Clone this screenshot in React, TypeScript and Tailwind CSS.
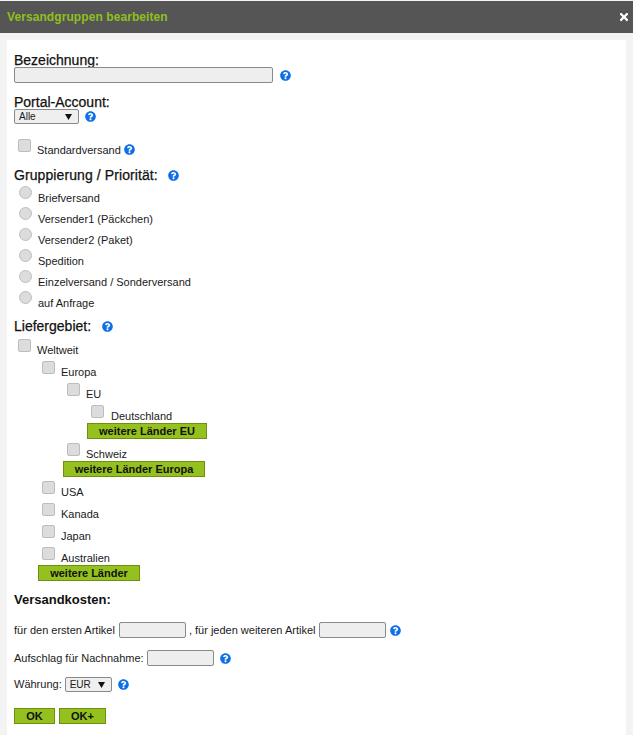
import { FaQuestionCircle, FaTimes } from "react-icons/fa";

function Help({ className = "" }: { className?: string }) {
  return <FaQuestionCircle className={`text-[11px] text-[#0f6fe8] shrink-0 ${className}`} />;
}

function Check({ className = "" }: { className?: string }) {
  return (
    <input
      type="checkbox"
      className={`appearance-none block w-[13px] h-[13px] shrink-0 rounded-[2px] border border-[#bdbdbd] bg-[#dcdcdc] ${className}`}
    />
  );
}

function Radio() {
  return (
    <input
      type="radio"
      className="appearance-none block w-[13px] h-[13px] shrink-0 rounded-full border border-[#bdbdbd] bg-[#dcdcdc] -mt-[5px]"
    />
  );
}

function TreeRow({ label, indent, gap = "ml-[6px]" }: { label: string; indent: string; gap?: string }) {
  return (
    <div className={`flex h-[22px] ${indent}`}>
      <Check className="mt-[2px]" />
      <span className={`${gap} mt-[6px] leading-[14px]`}>{label}</span>
    </div>
  );
}

function GreenButton({ label, className = "" }: { label: string; className?: string }) {
  return (
    <button
      type="button"
      className={`block h-[16px] border border-[#6f8f10] bg-[#95c11f] text-center text-[11px] font-bold leading-[14px] text-[#111] ${className}`}
    >
      {label}
    </button>
  );
}

function TextInput({ className = "" }: { className?: string }) {
  return <input className={`block h-[16px] rounded-[2px] border border-[#8a8a8a] bg-[#eeeeee] ${className}`} />;
}

function SelectBox({ label, className = "" }: { label: string; className?: string }) {
  return (
    <div
      className={`flex h-[15px] items-center justify-between rounded-[2px] border border-[#8a8a8a] bg-[#efefef] pl-[4px] pr-[6px] text-[10px] leading-none ${className}`}
    >
      <span>{label}</span>
      <svg width="7" height="6" viewBox="0 0 7 6">
        <path d="M0 0h7L3.5 6z" fill="#111" />
      </svg>
    </div>
  );
}

const radios = [
  "Briefversand",
  "Versender1 (Päckchen)",
  "Versender2 (Paket)",
  "Spedition",
  "Einzelversand / Sonderversand",
  "auf Anfrage",
];

const heading = "text-[14px] [-webkit-text-stroke:0.25px_#111] text-[#111]";

export default function App() {
  return (
    <div className="h-[735px] w-[633px] overflow-hidden bg-[#f3f3f3] font-['Liberation_Sans',Arial,sans-serif] text-[11px] text-[#222] pt-[1px]">
      <div className="flex h-[32px] items-center justify-between bg-[#555555] pl-[7px] pr-[3px]">
        <h1 className="text-[12px] font-bold text-[#8fbf1f] tracking-[0.08px]">Versandgruppen bearbeiten</h1>
        <FaTimes className="text-[12px] text-white" />
      </div>
      <div className="ml-[7px] mr-[7px] mt-[7px] h-[695px] bg-white pl-[7px] text-[#1a1a1a]">
        <div className={`h-[27px] pt-[12px] leading-[16px] ${heading}`}>Bezeichnung:</div>
        <div className="flex items-center">
          <TextInput className="w-[259px]" />
          <Help className="ml-[7px]" />
        </div>
        <div className={`mt-[11px] h-[15px] leading-[16px] ${heading}`}>Portal-Account:</div>
        <div className="flex items-center mt-[0px]">
          <SelectBox label="Alle" className="w-[65px]" />
          <Help className="ml-[6px]" />
        </div>
        <div className="mt-[15px] flex h-[16px] pl-[4px]">
          <Check />
          <span className="ml-[6px] mt-[5px] leading-[12px]">Standardversand</span>
          <Help className="ml-[3px] mt-[5px]" />
        </div>
        <div className={`mt-[12px] flex h-[16px] items-center ${heading}`}>
          <span className="tracking-[0.09px]">Gruppierung / Priorität:</span>
          <Help className="ml-[10px]" />
        </div>
        <div className="mt-[2px]">
          {radios.map((r) => (
            <div key={r} className="flex h-[21px] items-start pl-[5px] pt-[6px]">
              <Radio />
              <span className="ml-[6px] leading-[14px]">{r}</span>
            </div>
          ))}
        </div>
        <div className={`mt-[7px] flex h-[16px] items-center ${heading}`}>
          <span>Liefergebiet:</span>
          <Help className="ml-[11px]" />
        </div>
        <div className="mt-[3px]">
          <TreeRow label="Weltweit" indent="pl-[4px]" />
          <TreeRow label="Europa" indent="pl-[28px]" />
          <TreeRow label="EU" indent="pl-[53px]" />
          <TreeRow label="Deutschland" indent="pl-[77px]" gap="ml-[7px]" />
          <GreenButton label="weitere Länder EU" className="ml-[73px] w-[120px] -mt-[2px]" />
          <div className="mt-[2px]">
            <TreeRow label="Schweiz" indent="pl-[53px]" />
          </div>
          <GreenButton label="weitere Länder Europa" className="ml-[49px] w-[142px] -mt-[2px]" />
          <div className="mt-[2px]">
            <TreeRow label="USA" indent="pl-[28px]" />
            <TreeRow label="Kanada" indent="pl-[28px]" />
            <TreeRow label="Japan" indent="pl-[28px]" />
            <TreeRow label="Australien" indent="pl-[28px]" />
          </div>
          <GreenButton label="weitere Länder" className="ml-[24px] w-[102px] -mt-[2px]" />
        </div>
        <div className="mt-[11px] h-[16px] text-[13px] font-bold leading-[16px] text-[#111]">Versandkosten:</div>
        <div className="mt-[14px] flex h-[16px] items-center">
          <span>für den ersten Artikel</span>
          <TextInput className="ml-[4px] w-[67px]" />
          <span className="ml-[3px]">, für jeden weiteren Artikel</span>
          <TextInput className="ml-[4px] w-[67px]" />
          <Help className="ml-[4px]" />
        </div>
        <div className="mt-[12px] flex h-[16px] items-center">
          <span>Aufschlag für Nachnahme:</span>
          <TextInput className="ml-[3px] w-[67px]" />
          <Help className="ml-[6px]" />
        </div>
        <div className="mt-[11px] flex h-[15px] items-center">
          <span>Währung:</span>
          <SelectBox label="EUR" className="ml-[3px] w-[47px]" />
          <Help className="ml-[6px]" />
        </div>
        <div className="mt-[16px] flex gap-[4px]">
          <GreenButton label="OK" className="w-[41px]" />
          <GreenButton label="OK+" className="w-[47px]" />
        </div>
      </div>
    </div>
  );
}
